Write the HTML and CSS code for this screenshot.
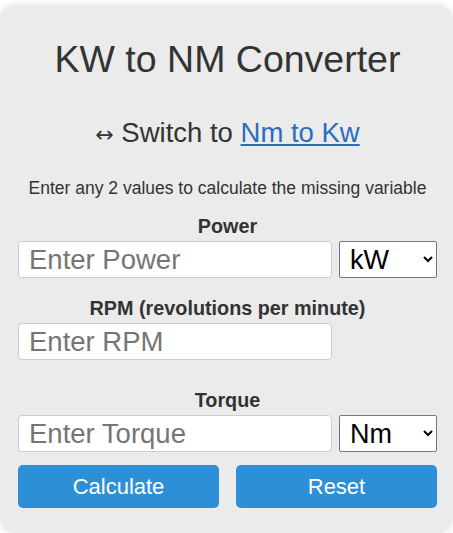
FILE: index.html
```html
<!DOCTYPE html>
<html lang="en">
<head>
<meta charset="utf-8">
<title>KW to NM Converter</title>
<link rel="stylesheet" href="styles.css">
</head>
<body>
<div class="card">
  <h1 class="title">KW to NM Converter</h1>
  <p class="switch"><span class="arrow">↔</span> Switch to <a href="#" class="link">Nm to Kw</a></p>
  <p class="hint">Enter any 2 values to calculate the missing variable</p>

  <label class="label label-power" for="power">Power</label>
  <div class="row">
    <input id="power" class="field" type="text" placeholder="Enter Power">
    <select class="unit"><option>kW</option><option>W</option><option>HP</option></select>
  </div>

  <label class="label" for="rpm">RPM (revolutions per minute)</label>
  <div class="row">
    <input id="rpm" class="field" type="text" placeholder="Enter RPM">
    <div class="unit-spacer"></div>
  </div>

  <label class="label label-torque" for="torque">Torque</label>
  <div class="row">
    <input id="torque" class="field" type="text" placeholder="Enter Torque">
    <select class="unit"><option>Nm</option><option>lb-ft</option></select>
  </div>

  <div class="buttons">
    <button class="btn" type="button">Calculate</button>
    <button class="btn" type="button">Reset</button>
  </div>
</div>
</body>
</html>
```

FILE: styles.css
```css
html, body {
  margin: 0;
  padding: 0;
  background: #ffffff;
}

body {
  font-family: "Liberation Sans", Arial, sans-serif;
  color: #333333;
}

.card {
  margin-top: 5px;
  background: #eaebea;
  border-radius: 16px;
  box-shadow: 0 0 8px rgba(0, 0, 0, 0.12);
  padding: 0 16px 24px 18px;
  height: 528px;
  box-sizing: border-box;
  display: flex;
  flex-direction: column;
}

.title {
  margin: 32px 0 0;
  font-size: 37.5px;
  line-height: 44px;
  font-weight: normal;
  text-align: center;
  color: #333333;
}

.switch {
  margin: 35px 0 0;
  font-size: 27.5px;
  line-height: 34px;
  text-align: center;
  color: #333333;
}

.arrow {
  font-family: "DejaVu Sans", sans-serif;
  font-size: 22px;
}

.link {
  color: #2a6ebd;
  text-decoration: underline;
}

.hint {
  margin: 25px 0 0;
  font-size: 17.5px;
  line-height: 22px;
  text-align: center;
  color: #333333;
}

.label {
  display: block;
  margin-top: 19px;
  font-size: 19.8px;
  line-height: 22px;
  font-weight: bold;
  text-align: center;
  color: #333333;
}

.label-power {
  margin-top: 16px;
}

.label-torque {
  margin-top: 29px;
}

.row {
  display: flex;
  gap: 7px;
  margin-top: 4px;
}

.field {
  width: 314px;
  height: 37px;
  box-sizing: border-box;
  border: 1px solid #cccccc;
  border-radius: 4px;
  background: #ffffff;
  padding: 0 10px;
  font-family: "Liberation Sans", Arial, sans-serif;
  font-size: 27.5px;
  color: #000000;
}

.field::placeholder {
  color: #757575;
}

.unit {
  width: 98px;
  height: 37px;
  box-sizing: border-box;
  border: 1px solid #767676;
  border-radius: 2px;
  background: #ffffff;
  font-family: "Liberation Sans", Arial, sans-serif;
  font-size: 27px;
  color: #000000;
  padding: 0 6px;
}

.unit-spacer {
  width: 98px;
}

.buttons {
  display: flex;
  gap: 17px;
  margin-top: 13px;
}

.btn {
  flex: 1;
  height: 43px;
  border: none;
  border-radius: 5px;
  background: #2d8fd6;
  color: #ffffff;
  font-family: "Liberation Sans", Arial, sans-serif;
  font-size: 22px;
}
```
